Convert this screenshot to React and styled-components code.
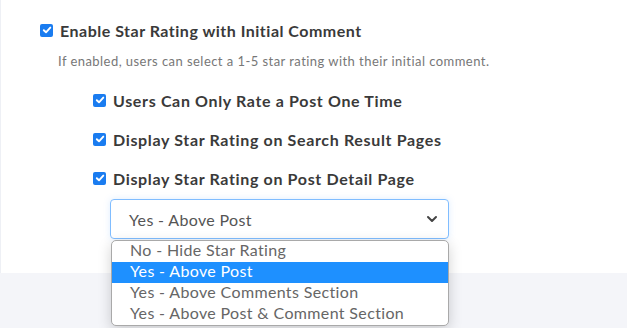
import React from "react";
import styled, { createGlobalStyle } from "styled-components";

const Global = createGlobalStyle`
  html, body { margin: 0; padding: 0; background: #f4f5f9; }
  body { font-family: Lato, "Open Sans", sans-serif; }
`;

const Page = styled.div`
  position: relative;
  min-height: 328px;
  display: flex;
  flex-direction: column;
`;

const Card = styled.div`
  height: 273px;
  background: #fff;
  border-left: 1px solid #eef0f5;
  box-sizing: border-box;
  padding: 20px 0 0 39px;
`;

const Footer = styled.div`
  flex: 1;
  background: #f4f5f9;
`;

const Row = styled.label`
  display: flex;
  align-items: center;
  gap: 7px;
  height: 20px;
  font-size: ${(p) => p.$size || 16}px;
  font-weight: 700;
  color: #3a3a3a;
  letter-spacing: ${(p) => p.$ls || 0.65}px;
`;

const Box = styled.span`
  width: 13px;
  height: 13px;
  border-radius: 2px;
  background: #1a7cf0;
  display: flex;
  align-items: center;
  justify-content: center;
  flex: none;
`;

const Desc = styled.div`
  margin: 13px 0 0 18px;
  font-size: 13px;
  color: #777;
  letter-spacing: 0.45px;
`;

const SubList = styled.div`
  margin: 21px 0 0 53px;
  display: flex;
  flex-direction: column;
  gap: 19px;
`;

const Select = styled.div`
  margin: 11px 0 0 70px;
  width: 339px;
  height: 40px;
  box-sizing: border-box;
  border: 1px solid #80bdff;
  border-radius: 4px;
  display: flex;
  align-items: center;
  justify-content: space-between;
  padding: 0 10px 0 18px;
  font-size: 16px;
  letter-spacing: 0.35px;
  color: #555;
  box-shadow: 0 0 6px rgba(128, 189, 255, 0.25);
`;

const List = styled.ul`
  position: absolute;
  left: 111px;
  top: 240px;
  width: 338px;
  margin: 0;
  padding: 0;
  list-style: none;
  background: #fff;
  border: 1px solid #a9a9a9;
  border-radius: 5px;
  box-sizing: border-box;
  overflow: hidden;
  box-shadow: 0 4px 14px rgba(0, 0, 0, 0.18);
  z-index: 2;
`;

const Opt = styled.li`
  height: 21px;
  line-height: 18px;
  box-sizing: border-box;
  padding-left: 18px;
  font-size: 16px;
  color: ${(p) => (p.$active ? "#fff" : "#666")};
  background: ${(p) => (p.$active ? "#1e90ff" : "transparent")};
  letter-spacing: 0.35px;
`;

const Check = () => (
  <svg width="10" height="10" viewBox="0 0 10 10">
    <path d="M1.8 5.2 L4 7.3 L8.3 2.6" fill="none" stroke="#fff" strokeWidth="1.9" strokeLinecap="round" strokeLinejoin="round" />
  </svg>
);

const Chevron = () => (
  <svg width="12" height="8" viewBox="0 0 12 8">
    <path d="M2 2 L6 6 L10 2" fill="none" stroke="#444" strokeWidth="2" strokeLinecap="round" strokeLinejoin="round" />
  </svg>
);

const CheckRow = ({ children, size, ls }) => (
  <Row $size={size} $ls={ls}>
    <Box><Check /></Box>
    {children}
  </Row>
);

export default function App() {
  const opts = [
    "No - Hide Star Rating",
    "Yes - Above Post",
    "Yes - Above Comments Section",
    "Yes - Above Post & Comment Section",
  ];
  return (
    <>
      <Global />
      <Page>
        <Card>
          <CheckRow size={16} ls={0.5}>Enable Star Rating with Initial Comment</CheckRow>
          <Desc>If enabled, users can select a 1-5 star rating with their initial comment.</Desc>
          <SubList>
            <CheckRow>Users Can Only Rate a Post One Time</CheckRow>
            <CheckRow>Display Star Rating on Search Result Pages</CheckRow>
            <CheckRow>Display Star Rating on Post Detail Page</CheckRow>
          </SubList>
          <Select>
            <span>Yes - Above Post</span>
            <Chevron />
          </Select>
        </Card>
        <Footer />
        <List>
          {opts.map((o, i) => (
            <Opt key={o} $active={i === 1}>{o}</Opt>
          ))}
        </List>
      </Page>
    </>
  );
}
